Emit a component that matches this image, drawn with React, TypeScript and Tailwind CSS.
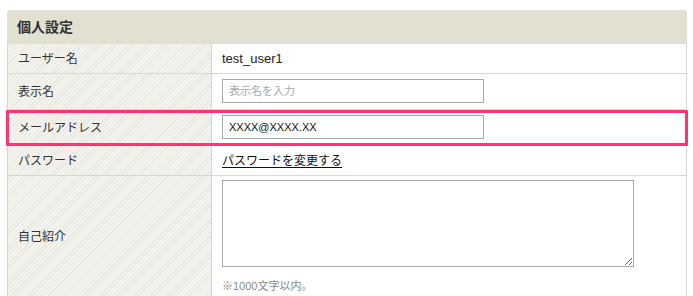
import React from "react";

const stripe =
  "bg-[image:repeating-linear-gradient(135deg,#f4f3ee_0px,#f4f3ee_2px,#e7e6df_2px,#e7e6df_3px)]";

function Label({ children }: { children: React.ReactNode }) {
  return (
    <div
      className={`w-[204px] shrink-0 border-r border-[#d6d6d6] ${stripe} pl-[10px] flex items-center text-[12px] text-[#333]`}
    >
      {children}
    </div>
  );
}

export default function App() {
  return (
    <div className="w-[693px] h-[296px] overflow-hidden bg-white font-['Liberation_Sans','Noto_Sans_CJK_JP',sans-serif]">
      <div className="pt-[10px] pl-[7px] w-[687px]">
        <div className="h-[34px] bg-[#e1e0d1] rounded-t-[3px] pl-[10px] flex items-center text-[14px] font-bold text-[#333]">
          個人設定
        </div>
        <div className="border-x border-[#d6d6d6]">
          <div className="flex h-[30px] border-b border-[#d6d6d6]">
            <Label>ユーザー名</Label>
            <div className="flex-1 pl-[10px] flex items-center text-[13px] text-[#222]">
              test_user1
            </div>
          </div>
          <div className="flex h-[36px] border-b border-[#d6d6d6]">
            <Label>表示名</Label>
            <div className="flex-1 pl-[10px] pt-[5px]">
              <input
                className="block w-[262px] h-[24px] border border-[#a9a9a9] px-[6px] text-[11px] text-[#222] outline-none placeholder:text-[#aaa]"
                placeholder="表示名を入力"
              />
            </div>
          </div>
          <div className="relative flex h-[36px] border-b border-[#d6d6d6]">
            <Label>メールアドレス</Label>
            <div className="flex-1 pl-[10px] pt-[5px]">
              <input
                className="block w-[262px] h-[24px] border border-[#a9a9a9] px-[6px] text-[11px] text-[#111] outline-none"
                defaultValue="XXXX@XXXX.XX"
              />
            </div>
            <div className="absolute left-[-2px] right-[-2px] top-0 bottom-[-1px] border-[3px] border-[#ff3470] rounded-[1px] pointer-events-none" />
          </div>
          <div className="flex h-[30px] border-b border-[#d6d6d6]">
            <Label>パスワード</Label>
            <div className="flex-1 pl-[10px] flex items-center text-[12px] text-[#111]">
              <span className="underline underline-offset-[2px]">パスワードを変更する</span>
            </div>
          </div>
          <div className="flex h-[121px]">
            <Label>自己紹介</Label>
            <div className="flex-1 pl-[10px] pt-[4px]">
              <textarea className="block w-[412px] h-[87px] border border-[#a9a9a9] outline-none" />
              <div className="mt-[11px] text-[11px] leading-[16px] text-[#888]">
                ※1000文字以内。
              </div>
            </div>
          </div>
        </div>
      </div>
    </div>
  );
}
